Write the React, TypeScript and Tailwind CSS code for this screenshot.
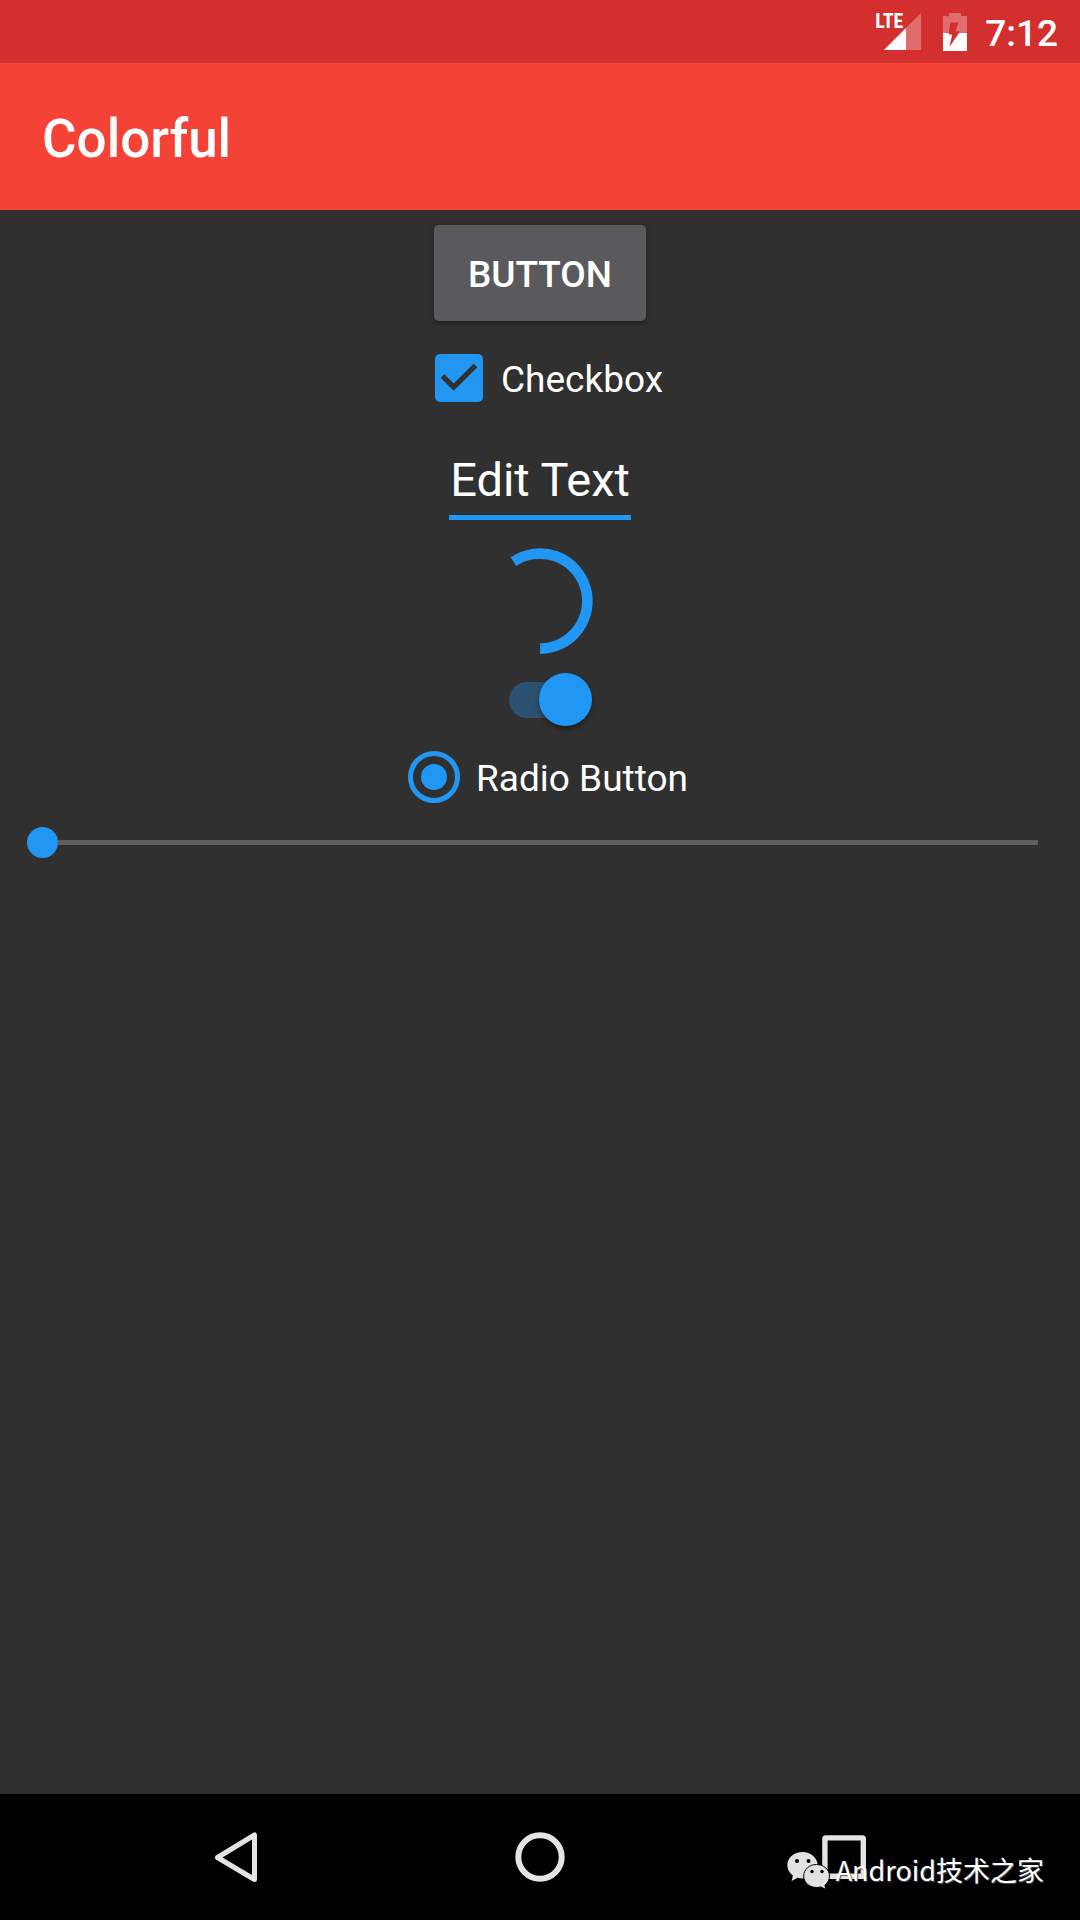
import { useState } from "react";

const StatusBar = () => (
  <div className="flex h-[63px] items-center justify-end bg-[#d32f2f] pr-[22px]">
    {/* Mobile signal */}
    <div className="relative mr-[22px] flex h-[37px] w-[46px] items-end justify-end">
      <span className="absolute top-0 left-0 font-['Roboto_Condensed','Open_Sans_Condensed','Roboto',sans-serif] text-xl leading-4 font-bold">LTE</span>
      <svg viewBox="0 0 37 37" className="h-[37px] w-[37px]" aria-hidden="true">
        <path d="M0 37L37 0V37Z" fill="#fff" fillOpacity="0.3" />
        <path d="M0 37L22 15V37Z" fill="#fff" />
      </svg>
    </div>

    {/* Battery, charging */}
    <svg viewBox="0 0 24 38" className="mr-[18px] h-[38px] w-6" aria-hidden="true">
      <path
        d="M6 0H18V3H24V20H16L17 18.5H12.5L15.5 9.5H7.5L5.7 20H0V3H6Z"
        fill="#fff"
        fillOpacity="0.3"
      />
      <path d="M0 20H5.7V21.5H9.2L6.5 34L16 20H24V38H0Z" fill="#fff" />
    </svg>

    <span className="pt-1 text-[37px] leading-[44px] font-medium">7:12</span>
  </div>
);

const Spinner = () => (
  <svg viewBox="0 0 126 126" className="h-[126px] w-[126px]" role="progressbar" aria-label="Loading">
    <path d="M36.5 23.6A47.5 47.5 0 1 1 63.1 110.6" fill="none" stroke="#2196f3" strokeWidth="10.6" />
  </svg>
);

const NavBar = () => (
  <nav className="relative flex h-[126px] items-center bg-black px-21">
    <button type="button" aria-label="Back" className="flex flex-1 justify-center">
      <svg viewBox="0 0 54 54" className="h-[54px] w-[54px]" fill="none" stroke="#e4e4e4" strokeWidth="5" strokeLinejoin="round">
        <path d="M8.5 27.5L45.5 5V49.5Z" />
      </svg>
    </button>
    <button type="button" aria-label="Home" className="flex flex-1 justify-center">
      <svg viewBox="0 0 54 54" className="h-[54px] w-[54px]" fill="none" stroke="#e4e4e4" strokeWidth="6">
        <circle cx="27" cy="27" r="21.7" />
      </svg>
    </button>
    <button type="button" aria-label="Recent apps" className="flex flex-1 justify-center">
      <svg viewBox="0 0 54 54" className="h-[54px] w-[54px]" fill="none" stroke="#e4e4e4" strokeWidth="5.4" strokeLinejoin="round">
        <rect x="7.9" y="7.9" width="38.4" height="38.4" rx="1" />
      </svg>
    </button>

    {/* Channel watermark */}
    <div className="pointer-events-none absolute right-9 bottom-[31px] flex items-center gap-[6px]">
      <svg viewBox="0 0 43 38" className="h-[38px] w-[43px]" aria-hidden="true">
        <path d="M15.5 1C7 1 .3 6.8.3 14.3c0 4.2 2.2 7.8 5.6 10.2L4.6 30l6-3.2c1.6.4 3.2.7 4.9.7 8.4 0 15.2-5.9 15.2-13.2S24 1 15.5 1Z" fill="#e2e2e2" />
        <circle cx="10" cy="10" r="2" fill="#000" />
        <circle cx="21.5" cy="10" r="2" fill="#000" />
        <path d="M29.5 13.5c-7.2 0-12.8 5-12.8 11.5s5.6 11.5 12.8 11.5c1.5 0 3-.2 4.300-.6l5.200 2.600-1.200-4.400c2.900-2.100 4.700-5.300 4.700-9.100 0-6.500-5.800-11.500-13-11.500Z" fill="#e2e2e2" stroke="#000" strokeWidth="1" />
        <circle cx="25" cy="20.5" r="1.7" fill="#000" />
        <circle cx="35" cy="20.5" r="1.7" fill="#000" />
      </svg>
      <span className="font-['Noto_Sans_CJK_SC',sans-serif] text-[27px] leading-8 whitespace-nowrap text-white [text-shadow:1px_1px_1px_#555]">
        Android技术之家
      </span>
    </div>
  </nav>
);

export default function App() {
  const [checked, setChecked] = useState(true);
  const [text, setText] = useState("Edit Text");
  const [on, setOn] = useState(true);
  const [value, setValue] = useState(0);

  return (
    <div className="flex min-h-screen flex-col bg-[#303030] font-[Roboto,sans-serif] text-white">
      <StatusBar />

      <header className="flex h-[147px] items-center bg-[#f44336] px-[42px] pt-1">
        <h1 className="text-[53px] leading-[64px] font-medium">Colorful</h1>
      </header>

      <main className="flex flex-1 flex-col items-center">
        <button
          type="button"
          className="my-[15px] h-24 rounded-[5px] bg-[#5a5a5c] px-[34px] pt-1 text-[37px] leading-[44px] font-medium shadow-[0_2px_5px_rgba(0,0,0,0.35)]"
        >
          BUTTON
        </button>

        {/* Checkbox */}
        <label className="flex h-21 items-center text-[37px] leading-[44px]">
          <span className="relative flex w-21 justify-center">
            <input
              type="checkbox"
              checked={checked}
              onChange={(e) => setChecked(e.target.checked)}
              className="h-12 w-12 appearance-none rounded-[5px] border-[5px] border-[#c1c1c1] checked:border-[#2196f3] checked:bg-[#2196f3]"
            />
            {checked && (
              <svg viewBox="0 0 48 48" className="pointer-events-none absolute h-12 w-12" aria-hidden="true">
                <path d="M7.5 22L18.7 33.2L40.5 11.5" fill="none" stroke="#303030" strokeWidth="5.2" />
              </svg>
            )}
          </span>
          <span className="pt-1">Checkbox</span>
        </label>

        <input
          type="text"
          aria-label="Edit text"
          value={text}
          onChange={(e) => setText(e.target.value)}
          className="mt-[30px] mb-[18px] h-[70px] w-[182px] border-b-[5px] border-[#2196f3] pb-[6px] text-center text-[47px] leading-[56px] outline-none"
        />

        <Spinner />

        {/* Switch */}
        <label className="flex h-[71px] items-center">
          <input
            type="checkbox"
            role="switch"
            aria-label="Switch"
            checked={on}
            onChange={(e) => setOn(e.target.checked)}
            className="peer sr-only"
          />
          <span className="ml-[21px] flex h-9 w-[83px] items-center rounded-full bg-[#5e5e5e] peer-checked:justify-end peer-checked:bg-[#2c5070]">
            <span className="h-[53px] w-[53px] rounded-full bg-[#2196f3] shadow-[0_3px_5px_rgba(0,0,0,0.4)]" />
          </span>
        </label>

        {/* Radio */}
        <label className="flex h-21 items-center text-[37px] leading-[44px]">
          <span className="flex w-21 justify-center">
            <input
              type="radio"
              name="option"
              defaultChecked
              className="h-[52px] w-[52px] appearance-none rounded-full border-[5px] border-[#2196f3] p-2 checked:bg-[#2196f3] checked:bg-clip-content"
            />
          </span>
          <span className="pt-1">Radio Button</span>
        </label>

        {/* Seek bar */}
        <div className="flex h-[47px] w-full items-center px-[27px]">
          <input
            type="range"
            aria-label="Seek bar"
            min={0}
            max={100}
            value={value}
            onChange={(e) => setValue(Number(e.target.value))}
            className="h-[31px] w-full appearance-none bg-[linear-gradient(#5e5e5e,#5e5e5e)] bg-[length:calc(100%-30px)_5px] bg-center bg-no-repeat [&::-webkit-slider-thumb]:h-[31px] [&::-webkit-slider-thumb]:w-[31px] [&::-webkit-slider-thumb]:appearance-none [&::-webkit-slider-thumb]:rounded-full [&::-webkit-slider-thumb]:bg-[#2196f3]"
          />
        </div>
      </main>

      <NavBar />
    </div>
  );
}
